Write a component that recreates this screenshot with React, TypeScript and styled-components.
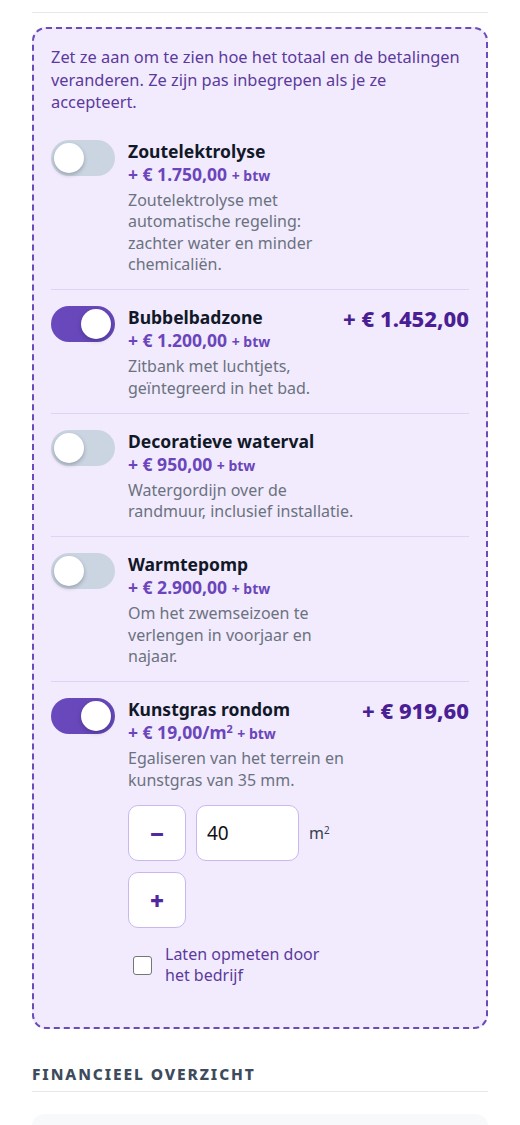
import React from "react";
import styled, { createGlobalStyle } from "styled-components";

const Global = createGlobalStyle`
  html, body { margin: 0; padding: 0; background: #ffffff; }
  body { font-family: "Noto Sans", "Open Sans", sans-serif; -webkit-font-smoothing: antialiased; }
  * { box-sizing: border-box; }
`;

const Page = styled.div`
  padding: 12px 32px 0;
  display: flex;
  flex-direction: column;
`;

const TopRule = styled.div`
  border-top: 1px solid #e5e7eb;
  height: 15px;
`;

const Card = styled.section`
  border: 2px dashed #6a4bb8;
  border-radius: 14px;
  background: #f2ebfd;
  padding: 17px 17px 26.5px;
`;

const Intro = styled.p`
  margin: 0 0 9.5px;
  font-size: 16.4px;
  line-height: 22.5px;
  color: #5b3a9e;
`;

const Row = styled.div<{ $last?: boolean }>`
  display: flex;
  align-items: flex-start;
  gap: 13px;
  padding: 16px 0 13.8px;
  border-bottom: ${(p) => (p.$last ? "none" : "1px solid #ddd3f4")};
  &:first-of-type {
    padding-top: 17px;
  }
`;

const Track = styled.span<{ $on: boolean }>`
  flex: 0 0 64px;
  height: 36px;
  border-radius: 18px;
  position: relative;
  background: ${(p) => (p.$on ? "linear-gradient(90deg, #6a48bd, #6647b8)" : "#cbd5e1")};
`;

const Knob = styled.span<{ $on: boolean }>`
  position: absolute;
  top: 3px;
  left: ${(p) => (p.$on ? "30px" : "3px")};
  width: 30px;
  height: 30px;
  border-radius: 50%;
  background: #ffffff;
  box-shadow: 0 2px 4px rgba(15, 23, 42, 0.28);
`;

const Body = styled.div`
  width: 228px;
  display: flex;
  flex-direction: column;
`;

const Title = styled.div`
  font-size: 17.5px;
  line-height: 22px;
  font-weight: 700;
  color: #111827;
`;

const Price = styled.div`
  font-size: 17.5px;
  line-height: 25.4px;
  font-weight: 700;
  color: #6a45bb;
`;

const Btw = styled.span`
  font-size: 14px;
`;

const Sup = styled.sup`
  font-size: 0.62em;
  line-height: 0;
  vertical-align: 0.55em;
`;

const Desc = styled.div`
  margin-top: 1.5px;
  font-size: 16px;
  line-height: 21.4px;
  color: #6b7280;
`;

const Total = styled.div`
  margin-left: auto;
  font-size: 22px;
  line-height: 24px;
  font-weight: 800;
  color: #4a1f94;
  white-space: nowrap;
`;

const Stepper = styled.div`
  display: flex;
  flex-wrap: wrap;
  align-items: center;
  gap: 11px 10px;
  margin-top: 14px;
`;

const StepBtn = styled.button`
  width: 58px;
  height: 56px;
  border: 1px solid #c9b8f0;
  border-radius: 10px;
  background: #ffffff;
  color: #52279f;
  font-family: inherit;
  font-size: 24px;
  font-weight: 900;
  display: flex;
  align-items: center;
  justify-content: center;
  padding: 0;
`;

const Qty = styled.input`
  width: 103px;
  height: 56px;
  border: 1px solid #c9b8f0;
  border-radius: 10px;
  background: #ffffff;
  font-family: inherit;
  font-size: 19px;
  color: #111111;
  padding: 0 10px;
  outline: none;
`;

const Unit = styled.span`
  font-size: 16px;
  color: #374151;
`;

const CheckLabel = styled.label`
  display: flex;
  align-items: center;
  gap: 13px;
  margin-top: 16px;
  padding-left: 5px;
  font-size: 16px;
  line-height: 21.4px;
  color: #5b3a9e;
`;

const Box = styled.span`
  flex: 0 0 19px;
  width: 19px;
  height: 19px;
  border: 1.5px solid #767676;
  border-radius: 3px;
  background: #ffffff;
`;

const SectionHead = styled.h2`
  margin: 35px 0 0;
  padding-bottom: 7px;
  border-bottom: 1px solid #e5e7eb;
  font-size: 15.5px;
  line-height: 20px;
  font-weight: 800;
  letter-spacing: 1.9px;
  color: #3d4b5c;
  text-transform: uppercase;
`;

const NextCard = styled.div`
  margin-top: 22px;
  height: 60px;
  border-radius: 12px;
  background: #f8f9fb;
`;

type Opt = {
  title: string;
  price: string;
  desc: string;
  on: boolean;
  total?: string;
};

const options: Opt[] = [
  {
    title: "Zoutelektrolyse",
    price: "+ € 1.750,00",
    desc: "Zoutelektrolyse met automatische regeling: zachter water en minder chemicaliën.",
    on: false,
  },
  {
    title: "Bubbelbadzone",
    price: "+ € 1.200,00",
    desc: "Zitbank met luchtjets, geïntegreerd in het bad.",
    on: true,
    total: "+ € 1.452,00",
  },
  {
    title: "Decoratieve waterval",
    price: "+ € 950,00",
    desc: "Watergordijn over de randmuur, inclusief installatie.",
    on: false,
  },
  {
    title: "Warmtepomp",
    price: "+ € 2.900,00",
    desc: "Om het zwemseizoen te verlengen in voorjaar en najaar.",
    on: false,
  },
];

function Toggle({ on }: { on: boolean }) {
  return (
    <Track $on={on} role="switch" aria-checked={on}>
      <Knob $on={on} />
    </Track>
  );
}

export default function App() {
  return (
    <>
      <Global />
      <Page>
        <TopRule />
        <Card>
          <Intro>
            Zet ze aan om te zien hoe het totaal en de betalingen veranderen. Ze zijn pas inbegrepen als je ze
            accepteert.
          </Intro>
          {options.map((o) => (
            <Row key={o.title}>
              <Toggle on={o.on} />
              <Body>
                <Title>{o.title}</Title>
                <Price>
                  {o.price} <Btw>+ btw</Btw>
                </Price>
                <Desc>{o.desc}</Desc>
              </Body>
              {o.total && <Total>{o.total}</Total>}
            </Row>
          ))}
          <Row $last>
            <Toggle on />
            <Body>
              <Title>Kunstgras rondom</Title>
              <Price>
                + € 19,00/m<Sup>2</Sup> <Btw>+ btw</Btw>
              </Price>
              <Desc>Egaliseren van het terrein en kunstgras van 35 mm.</Desc>
              <Stepper>
                <StepBtn aria-label="minder">−</StepBtn>
                <Qty defaultValue="40" />
                <Unit>
                  m<Sup>2</Sup>
                </Unit>
                <StepBtn aria-label="meer">+</StepBtn>
              </Stepper>
              <CheckLabel>
                <Box />
                <span>
                  Laten opmeten door
                  <br />
                  het bedrijf
                </span>
              </CheckLabel>
            </Body>
            <Total>+ € 919,60</Total>
          </Row>
        </Card>
        <SectionHead>Financieel overzicht</SectionHead>
        <NextCard />
      </Page>
    </>
  );
}
